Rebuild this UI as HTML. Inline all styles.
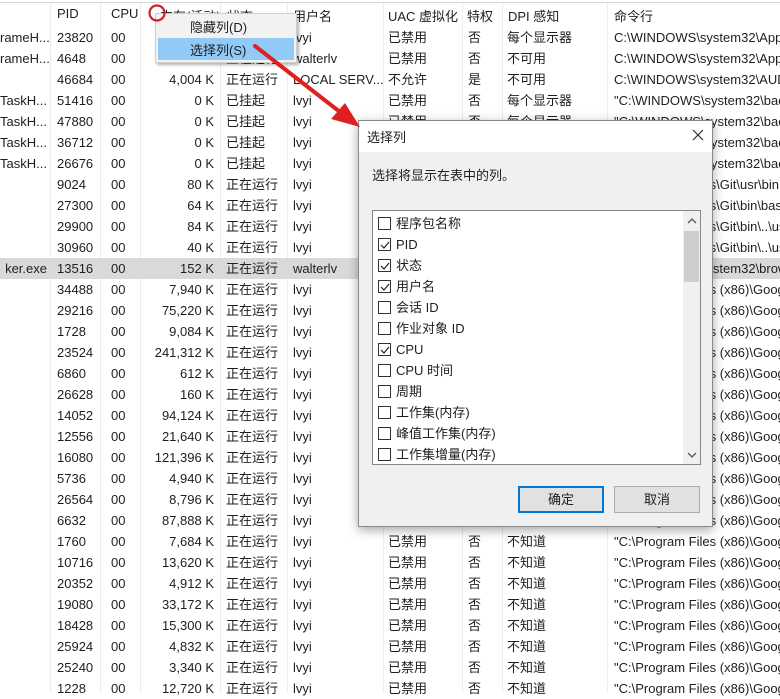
<!DOCTYPE html>
<html><head><meta charset="utf-8">
<style>
*{margin:0;padding:0;box-sizing:border-box}
body{width:780px;height:693px;overflow:hidden;background:#fff;position:relative;font-family:"Liberation Sans","Noto Sans CJK SC",sans-serif;font-size:13px;color:#1e1e1e}
.hdr{position:absolute;left:0;top:2px;width:780px;height:25px;border-top:1px solid #d5d5d5}
.vl{position:absolute;top:3px;height:690px;width:1px;background:#ececec}
table{position:absolute;left:0;top:27px;border-collapse:collapse;table-layout:fixed;width:780px}
td{height:21px;padding:0;white-space:nowrap;overflow:hidden;line-height:21px}
td.n{text-align:right;padding-right:6px}
td:nth-child(1){text-align:right;padding-right:3px}
td:nth-child(2){padding-left:7px}
td:nth-child(3){padding-left:11px}
td:nth-child(5){padding-left:6px}
td:nth-child(6){padding-left:6px}
td:nth-child(7){padding-left:5px}
td:nth-child(8){padding-left:6px}
td:nth-child(9){padding-left:5px}
td:nth-child(10){padding-left:7px}
tr.sel td{background:#d9d9d9}
.h{position:absolute;top:6px}
.menu{position:absolute;left:155px;top:13px;width:142px;height:50px;background:#f2f2f2;border:1px solid #cfcfcf;box-shadow:2px 2px 3px rgba(0,0,0,.3)}
.menu div{position:absolute;left:34px}
.dlg{position:absolute;left:358px;top:120px;width:355px;height:407px;background:#f0f0f0;border:1px solid #8a8a8a;box-shadow:0 3px 10px rgba(0,0,0,.35)}
.tb{position:absolute;left:0;top:0;width:353px;height:31px;background:#fff}
.list{position:absolute;left:13px;top:89px;width:329px;height:255px;background:#fff;border:1px solid #828790}
.it{position:absolute;left:5px;height:21px;line-height:21px}
.cb{position:absolute;left:0;top:4px;width:13px;height:13px;border:1px solid #333;background:#fff}
.it span{position:absolute;left:18px;white-space:nowrap}
.btn{position:absolute;top:365px;width:86px;height:27px;border:1px solid #adadad;background:#e1e1e1;text-align:center;line-height:25px}
</style></head><body>
<div class="hdr"></div>
<div class="vl" style="left:50px"></div><div class="vl" style="left:100px"></div><div class="vl" style="left:140px"></div><div class="vl" style="left:220px"></div><div class="vl" style="left:287px"></div><div class="vl" style="left:383px"></div><div class="vl" style="left:462px"></div><div class="vl" style="left:502px"></div><div class="vl" style="left:607px"></div>
<div class="h" style="left:57px">PID</div>
<div class="h" style="left:111px">CPU</div>
<div class="h" style="left:160px">内存(活动)</div>
<div class="h" style="left:227px">状态</div>
<div class="h" style="left:293px">用户名</div>
<div class="h" style="left:388px">UAC 虚拟化</div>
<div class="h" style="left:467px">特权</div>
<div class="h" style="left:508px">DPI 感知</div>
<div class="h" style="left:614px">命令行</div>
<table>
<colgroup><col style="width:50px"><col style="width:50px"><col style="width:40px"><col style="width:80px"><col style="width:67px"><col style="width:96px"><col style="width:79px"><col style="width:40px"><col style="width:105px"><col style="width:173px"></colgroup>
<tr><td>rameH...</td><td>23820</td><td>00</td><td class="n">236 K</td><td>正在运行</td><td>lvyi</td><td>已禁用</td><td>否</td><td>每个显示器</td><td>C:\WINDOWS\system32\ApplicationFrameHost.exe</td></tr>
<tr><td>rameH...</td><td>4648</td><td>00</td><td class="n">0 K</td><td>正在运行</td><td>walterlv</td><td>已禁用</td><td>否</td><td>不可用</td><td>C:\WINDOWS\system32\ApplicationFrameHost.exe</td></tr>
<tr><td></td><td>46684</td><td>00</td><td class="n">4,004 K</td><td>正在运行</td><td>LOCAL SERV...</td><td>不允许</td><td>是</td><td>不可用</td><td>C:\WINDOWS\system32\AUDIODG.EXE</td></tr>
<tr><td>TaskH...</td><td>51416</td><td>00</td><td class="n">0 K</td><td>已挂起</td><td>lvyi</td><td>已禁用</td><td>否</td><td>每个显示器</td><td>"C:\WINDOWS\system32\backgroundTaskHost.exe"</td></tr>
<tr><td>TaskH...</td><td>47880</td><td>00</td><td class="n">0 K</td><td>已挂起</td><td>lvyi</td><td>已禁用</td><td>否</td><td>每个显示器</td><td>"C:\WINDOWS\system32\backgroundTaskHost.exe"</td></tr>
<tr><td>TaskH...</td><td>36712</td><td>00</td><td class="n">0 K</td><td>已挂起</td><td>lvyi</td><td>已禁用</td><td>否</td><td>每个显示器</td><td>"C:\WINDOWS\system32\backgroundTaskHost.exe"</td></tr>
<tr><td>TaskH...</td><td>26676</td><td>00</td><td class="n">0 K</td><td>已挂起</td><td>lvyi</td><td>已禁用</td><td>否</td><td>每个显示器</td><td>"C:\WINDOWS\system32\backgroundTaskHost.exe"</td></tr>
<tr><td></td><td>9024</td><td>00</td><td class="n">80 K</td><td>正在运行</td><td>lvyi</td><td>已禁用</td><td>否</td><td>不知道</td><td>"C:\Program Files\Git\usr\bin</td></tr>
<tr><td></td><td>27300</td><td>00</td><td class="n">64 K</td><td>正在运行</td><td>lvyi</td><td>已禁用</td><td>否</td><td>不知道</td><td>"C:\Program Files\Git\bin\bash</td></tr>
<tr><td></td><td>29900</td><td>00</td><td class="n">84 K</td><td>正在运行</td><td>lvyi</td><td>已禁用</td><td>否</td><td>不知道</td><td>"C:\Program Files\Git\bin\..\usr</td></tr>
<tr><td></td><td>30960</td><td>00</td><td class="n">40 K</td><td>正在运行</td><td>lvyi</td><td>已禁用</td><td>否</td><td>不知道</td><td>"C:\Program Files\Git\bin\..\usr</td></tr>
<tr class="sel"><td>ker.exe</td><td>13516</td><td>00</td><td class="n">152 K</td><td>正在运行</td><td>walterlv</td><td>已禁用</td><td>否</td><td>不知道</td><td>C:\WINDOWS\system32\browser</td></tr>
<tr><td></td><td>34488</td><td>00</td><td class="n">7,940 K</td><td>正在运行</td><td>lvyi</td><td>已禁用</td><td>否</td><td>不知道</td><td>"C:\Program Files (x86)\Goog</td></tr>
<tr><td></td><td>29216</td><td>00</td><td class="n">75,220 K</td><td>正在运行</td><td>lvyi</td><td>已禁用</td><td>否</td><td>不知道</td><td>"C:\Program Files (x86)\Goog</td></tr>
<tr><td></td><td>1728</td><td>00</td><td class="n">9,084 K</td><td>正在运行</td><td>lvyi</td><td>已禁用</td><td>否</td><td>不知道</td><td>"C:\Program Files (x86)\Goog</td></tr>
<tr><td></td><td>23524</td><td>00</td><td class="n">241,312 K</td><td>正在运行</td><td>lvyi</td><td>已禁用</td><td>否</td><td>不知道</td><td>"C:\Program Files (x86)\Goog</td></tr>
<tr><td></td><td>6860</td><td>00</td><td class="n">612 K</td><td>正在运行</td><td>lvyi</td><td>已禁用</td><td>否</td><td>不知道</td><td>"C:\Program Files (x86)\Goog</td></tr>
<tr><td></td><td>26628</td><td>00</td><td class="n">160 K</td><td>正在运行</td><td>lvyi</td><td>已禁用</td><td>否</td><td>不知道</td><td>"C:\Program Files (x86)\Goog</td></tr>
<tr><td></td><td>14052</td><td>00</td><td class="n">94,124 K</td><td>正在运行</td><td>lvyi</td><td>已禁用</td><td>否</td><td>不知道</td><td>"C:\Program Files (x86)\Goog</td></tr>
<tr><td></td><td>12556</td><td>00</td><td class="n">21,640 K</td><td>正在运行</td><td>lvyi</td><td>已禁用</td><td>否</td><td>不知道</td><td>"C:\Program Files (x86)\Goog</td></tr>
<tr><td></td><td>16080</td><td>00</td><td class="n">121,396 K</td><td>正在运行</td><td>lvyi</td><td>已禁用</td><td>否</td><td>不知道</td><td>"C:\Program Files (x86)\Goog</td></tr>
<tr><td></td><td>5736</td><td>00</td><td class="n">4,940 K</td><td>正在运行</td><td>lvyi</td><td>已禁用</td><td>否</td><td>不知道</td><td>"C:\Program Files (x86)\Goog</td></tr>
<tr><td></td><td>26564</td><td>00</td><td class="n">8,796 K</td><td>正在运行</td><td>lvyi</td><td>已禁用</td><td>否</td><td>不知道</td><td>"C:\Program Files (x86)\Goog</td></tr>
<tr><td></td><td>6632</td><td>00</td><td class="n">87,888 K</td><td>正在运行</td><td>lvyi</td><td>已禁用</td><td>否</td><td>不知道</td><td>"C:\Program Files (x86)\Goog</td></tr>
<tr><td></td><td>1760</td><td>00</td><td class="n">7,684 K</td><td>正在运行</td><td>lvyi</td><td>已禁用</td><td>否</td><td>不知道</td><td>"C:\Program Files (x86)\Goog</td></tr>
<tr><td></td><td>10716</td><td>00</td><td class="n">13,620 K</td><td>正在运行</td><td>lvyi</td><td>已禁用</td><td>否</td><td>不知道</td><td>"C:\Program Files (x86)\Goog</td></tr>
<tr><td></td><td>20352</td><td>00</td><td class="n">4,912 K</td><td>正在运行</td><td>lvyi</td><td>已禁用</td><td>否</td><td>不知道</td><td>"C:\Program Files (x86)\Goog</td></tr>
<tr><td></td><td>19080</td><td>00</td><td class="n">33,172 K</td><td>正在运行</td><td>lvyi</td><td>已禁用</td><td>否</td><td>不知道</td><td>"C:\Program Files (x86)\Goog</td></tr>
<tr><td></td><td>18428</td><td>00</td><td class="n">15,300 K</td><td>正在运行</td><td>lvyi</td><td>已禁用</td><td>否</td><td>不知道</td><td>"C:\Program Files (x86)\Goog</td></tr>
<tr><td></td><td>25924</td><td>00</td><td class="n">4,832 K</td><td>正在运行</td><td>lvyi</td><td>已禁用</td><td>否</td><td>不知道</td><td>"C:\Program Files (x86)\Goog</td></tr>
<tr><td></td><td>25240</td><td>00</td><td class="n">3,340 K</td><td>正在运行</td><td>lvyi</td><td>已禁用</td><td>否</td><td>不知道</td><td>"C:\Program Files (x86)\Goog</td></tr>
<tr><td></td><td>1228</td><td>00</td><td class="n">12,720 K</td><td>正在运行</td><td>lvyi</td><td>已禁用</td><td>否</td><td>不知道</td><td>"C:\Program Files (x86)\Goog</td></tr>
</table>

<div class="menu">
<div style="top:3px">隐藏列(D)</div>
<div style="left:2px;top:24px;width:136px;height:22px;background:#91c9f7"></div>
<div style="top:26px">选择列(S)</div>
</div>

<div class="dlg">
<div class="tb"></div>
<div style="position:absolute;left:8px;top:6px">选择列</div>
<svg style="position:absolute;left:333px;top:8px" width="12" height="12"><path d="M1 1L11 11M11 1L1 11" stroke="#222" stroke-width="1.1"/></svg>
<div style="position:absolute;left:13px;top:44px">选择将显示在表中的列。</div>
<div class="list">
<div class="it" style="top:2px"><div class="cb"></div><span>程序包名称</span></div>
<div class="it" style="top:23px"><div class="cb"></div><span>PID</span></div>
<div class="it" style="top:44px"><div class="cb"></div><span>状态</span></div>
<div class="it" style="top:65px"><div class="cb"></div><span>用户名</span></div>
<div class="it" style="top:86px"><div class="cb"></div><span>会话 ID</span></div>
<div class="it" style="top:107px"><div class="cb"></div><span>作业对象 ID</span></div>
<div class="it" style="top:128px"><div class="cb"></div><span>CPU</span></div>
<div class="it" style="top:149px"><div class="cb"></div><span>CPU 时间</span></div>
<div class="it" style="top:170px"><div class="cb"></div><span>周期</span></div>
<div class="it" style="top:191px"><div class="cb"></div><span>工作集(内存)</span></div>
<div class="it" style="top:212px"><div class="cb"></div><span>峰值工作集(内存)</span></div>
<div class="it" style="top:233px"><div class="cb"></div><span>工作集增量(内存)</span></div>
<svg style="position:absolute;left:5px;top:27px" width="13" height="130"><g fill="none" stroke="#222" stroke-width="1.2"><path d="M3 7l3 3l5-6"/><path d="M3 28l3 3l5-6"/><path d="M3 49l3 3l5-6"/><path d="M3 112l3 3l5-6"/></g></svg>
<div style="position:absolute;left:310px;top:0;width:17px;height:253px;background:#f0f0f0"></div>
<div style="position:absolute;left:311px;top:20px;width:15px;height:51px;background:#cdcdcd"></div>
<svg style="position:absolute;left:314px;top:6px" width="10" height="8"><path d="M1 6l4-4l4 4" fill="none" stroke="#555" stroke-width="1.3"/></svg>
<svg style="position:absolute;left:314px;top:240px" width="10" height="8"><path d="M1 2l4 4l4-4" fill="none" stroke="#555" stroke-width="1.3"/></svg>
</div>
<div class="btn" style="left:159px;border:2px solid #0078d7;line-height:23px">确定</div>
<div class="btn" style="left:255px">取消</div>
</div>

<svg style="position:absolute;left:0;top:0" width="780" height="693">
<circle cx="157" cy="13" r="7.5" fill="none" stroke="#d0202a" stroke-width="2.2"/>
<line x1="255" y1="46" x2="340" y2="112" stroke="#e02020" stroke-width="4" stroke-linecap="round"/>
<polygon points="360,127 331,119 345,103" fill="#e02020"/>
</svg>
</body></html>
